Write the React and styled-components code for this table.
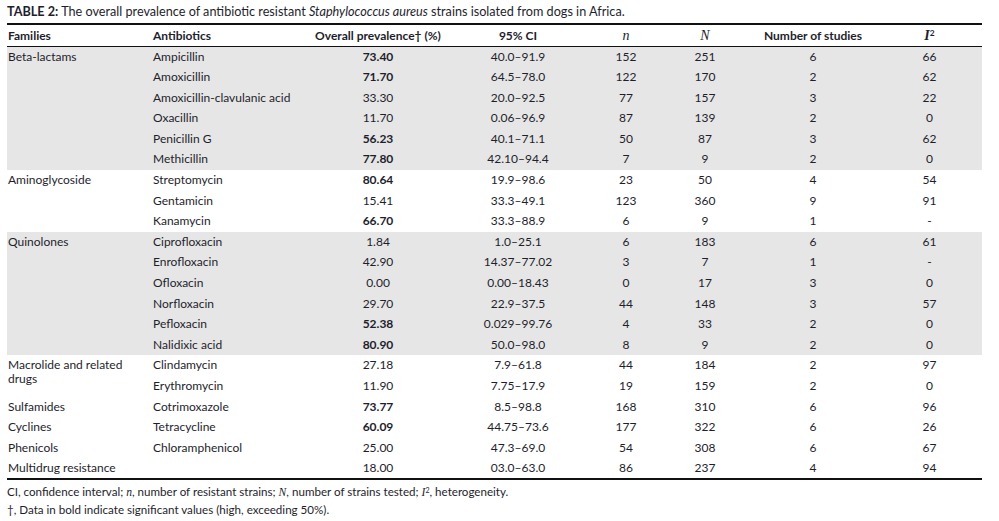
import React from "react";
import styled, { createGlobalStyle } from "styled-components";

const GlobalStyle = createGlobalStyle`
  html, body {
    margin: 0;
    padding: 0;
    background: #ffffff;
  }
  body {
    font-family: Lato, "Open Sans", sans-serif;
    color: #1e1e2c;
  }
`;

const groups = [
  {
    family: "Beta-lactams",
    shaded: true,
    rows: [
      ["Ampicillin", "73.40", true, "40.0–91.9", "152", "251", "6", "66"],
      ["Amoxicillin", "71.70", true, "64.5–78.0", "122", "170", "2", "62"],
      ["Amoxicillin-clavulanic acid", "33.30", false, "20.0–92.5", "77", "157", "3", "22"],
      ["Oxacillin", "11.70", false, "0.06–96.9", "87", "139", "2", "0"],
      ["Penicillin G", "56.23", true, "40.1–71.1", "50", "87", "3", "62"],
      ["Methicillin", "77.80", true, "42.10–94.4", "7", "9", "2", "0"],
    ],
  },
  {
    family: "Aminoglycoside",
    rows: [
      ["Streptomycin", "80.64", true, "19.9–98.6", "23", "50", "4", "54"],
      ["Gentamicin", "15.41", false, "33.3–49.1", "123", "360", "9", "91"],
      ["Kanamycin", "66.70", true, "33.3–88.9", "6", "9", "1", "-"],
    ],
  },
  {
    family: "Quinolones",
    shaded: true,
    rows: [
      ["Ciprofloxacin", "1.84", false, "1.0–25.1", "6", "183", "6", "61"],
      ["Enrofloxacin", "42.90", false, "14.37–77.02", "3", "7", "1", "-"],
      ["Ofloxacin", "0.00", false, "0.00–18.43", "0", "17", "3", "0"],
      ["Norfloxacin", "29.70", false, "22.9–37.5", "44", "148", "3", "57"],
      ["Pefloxacin", "52.38", true, "0.029–99.76", "4", "33", "2", "0"],
      ["Nalidixic acid", "80.90", true, "50.0–98.0", "8", "9", "2", "0"],
    ],
  },
  {
    family: "Macrolide and related drugs",
    rows: [
      ["Clindamycin", "27.18", false, "7.9–61.8", "44", "184", "2", "97"],
      ["Erythromycin", "11.90", false, "7.75–17.9", "19", "159", "2", "0"],
    ],
  },
  {
    family: "Sulfamides",
    rows: [["Cotrimoxazole", "73.77", true, "8.5–98.8", "168", "310", "6", "96"]],
  },
  {
    family: "Cyclines",
    rows: [["Tetracycline", "60.09", true, "44.75–73.6", "177", "322", "6", "26"]],
  },
  {
    family: "Phenicols",
    rows: [["Chloramphenicol", "25.00", false, "47.3–69.0", "54", "308", "6", "67"]],
  },
  {
    family: "Multidrug resistance",
    rows: [["", "18.00", false, "03.0–63.0", "86", "237", "4", "94"]],
  },
];

const Page = styled.div`
  width: 975px;
  padding: 3px 0 0 7px;
`;

const Title = styled.div`
  font-size: 12.65px;
  line-height: 17px;
  padding-bottom: 3px;
  border-bottom: 2.5px solid #111;

  b {
    font-weight: 700;
  }
`;

const Table = styled.table`
  width: 975px;
  border-collapse: collapse;
  table-layout: fixed;
  font-size: 12px;
`;

const HeadCell = styled.th`
  height: 21px;
  padding: 0 0 0 ${(p) => (p.$center ? 0 : 1)}px;
  font-weight: 700;
  text-align: ${(p) => (p.$center ? "center" : "left")};
  border-bottom: 1.5px solid #111;
  vertical-align: middle;
`;

const Row = styled.tr`
  background: ${(p) => (p.$shaded ? "#e6e6e6" : "#ffffff")};
  border-bottom: ${(p) => (p.$last ? "2.5px solid #111" : "none")};
`;

const Cell = styled.td`
  height: 20.6px;
  padding: 3px 0 0 ${(p) => (p.$center ? 0 : 1)}px;
  box-sizing: border-box;
  line-height: 14px;
  vertical-align: top;
  text-align: ${(p) => (p.$center ? "center" : "left")};
  font-weight: ${(p) => (p.$bold ? 700 : 400)};
`;

const Sym = styled.i`
  font-family: "Liberation Serif", "DejaVu Serif", serif;
  font-style: italic;
  font-weight: ${(p) => (p.$bold ? 700 : 400)};
  font-size: ${(p) => (p.$big ? "14px" : "inherit")};

  sup {
    font-size: 0.6em;
    vertical-align: 0.5em;
    font-family: Lato, sans-serif;
    font-style: normal;
  }
`;

const Notes = styled.div`
  font-size: 11.6px;
  line-height: 17px;
  padding-top: 2px;
`;

export default function App() {
  return (
    <>
      <GlobalStyle />
      <Page>
        <Title>
          <b>TABLE 2:</b> The overall prevalence of antibiotic resistant <i>Staphylococcus aureus</i> strains isolated from dogs in Africa.
        </Title>
        <Table>
          <colgroup>
            <col style={{ width: 145 }} />
            <col style={{ width: 159 }} />
            <col style={{ width: 134 }} />
            <col style={{ width: 146 }} />
            <col style={{ width: 70 }} />
            <col style={{ width: 88 }} />
            <col style={{ width: 128 }} />
            <col style={{ width: 105 }} />
          </colgroup>
          <thead>
            <tr>
              <HeadCell>Families</HeadCell>
              <HeadCell>Antibiotics</HeadCell>
              <HeadCell $center>Overall prevalence† (%)</HeadCell>
              <HeadCell $center>95% CI</HeadCell>
              <HeadCell $center><Sym $big>n</Sym></HeadCell>
              <HeadCell $center><Sym $big>N</Sym></HeadCell>
              <HeadCell $center>Number of studies</HeadCell>
              <HeadCell $center><Sym $big $bold>I<sup>2</sup></Sym></HeadCell>
            </tr>
          </thead>
          <tbody>
            {groups.map((g, gi) =>
              g.rows.map((r, ri) => (
                <Row
                  key={`${gi}-${ri}`}
                  $shaded={g.shaded}
                  $last={gi === groups.length - 1 && ri === g.rows.length - 1}
                >
                  {ri === 0 && <Cell rowSpan={g.rows.length}>{g.family}</Cell>}
                  <Cell>{r[0]}</Cell>
                  <Cell $center $bold={r[2]}>{r[1]}</Cell>
                  <Cell $center>{r[3]}</Cell>
                  <Cell $center>{r[4]}</Cell>
                  <Cell $center>{r[5]}</Cell>
                  <Cell $center>{r[6]}</Cell>
                  <Cell $center>{r[7]}</Cell>
                </Row>
              ))
            )}
          </tbody>
        </Table>
        <Notes>
          <div>
            CI, confidence interval; <Sym>n</Sym>, number of resistant strains; <Sym>N</Sym>, number of strains tested; <Sym>I<sup>2</sup></Sym>, heterogeneity.
          </div>
          <div>†, Data in bold indicate significant values (high, exceeding 50%).</div>
        </Notes>
      </Page>
    </>
  );
}
